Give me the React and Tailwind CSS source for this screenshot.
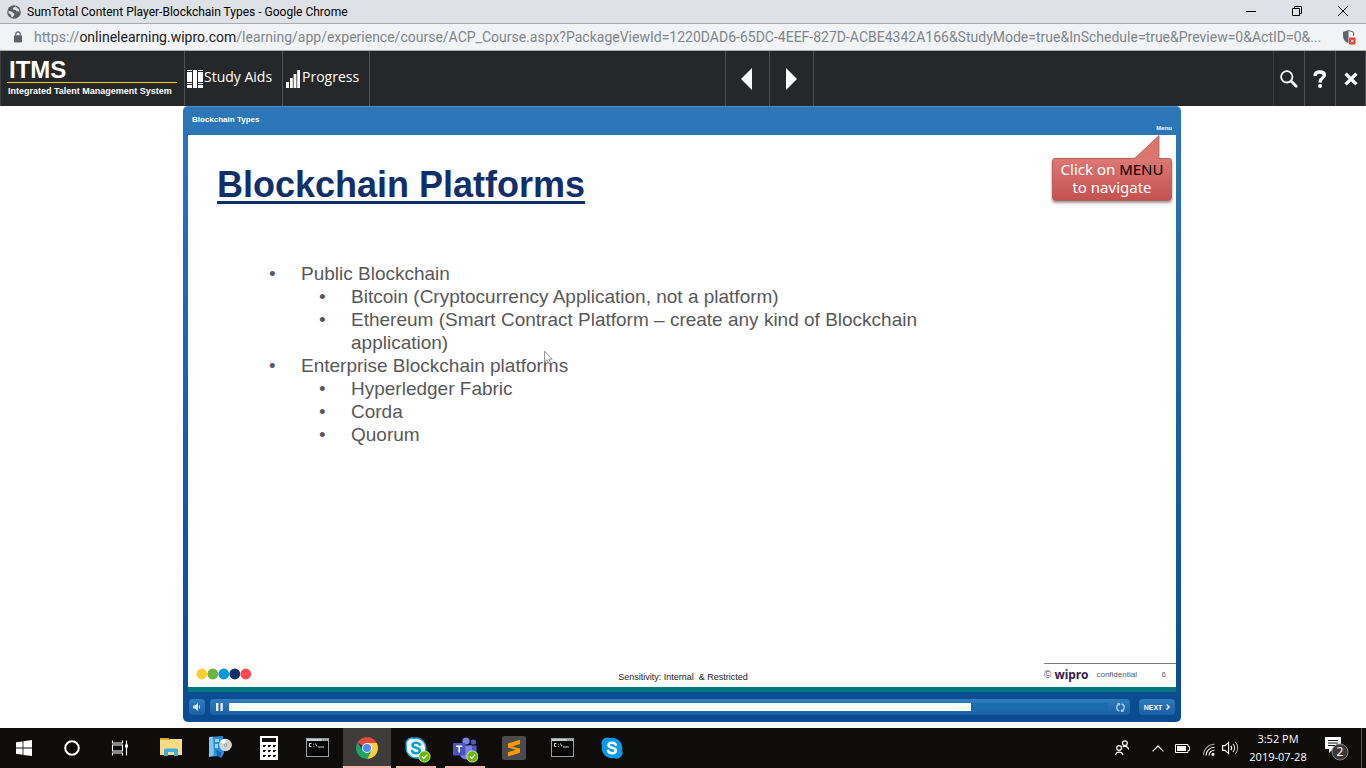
import React from "react";

const UI = "font-['Open_Sans','Noto_Sans',sans-serif]";

function GlobeIcon() {
  return (
    <svg viewBox="0 0 14 14" className="size-3.5" aria-hidden="true">
      <circle cx="7" cy="7" r="6.8" fill="#5a5e63" />
      <path d="M1.6 5.6 C3 7 4.6 6 5.4 7.2 C6 8.3 7.6 7.8 7.4 9.4 C7.2 10.6 6 10.8 5.6 12.4 L4 11.6 C4.6 9.6 3 9 1.4 8.2 Z M8.6 1.6 C7.6 2.6 5.6 2.6 5.8 4 C6 5.2 8.4 4.4 9 5.6 C9.6 6.8 11 6.4 12.4 6.8 L12 4.4 Z" fill="#dee1e6" />
    </svg>
  );
}

function LockIcon() {
  return (
    <svg viewBox="0 0 10 12" className="h-3 w-2.5" aria-hidden="true">
      <rect x="1" y="4.2" width="8" height="7.2" rx="0.8" fill="#5f6368" />
      <path d="M2.8 4.5 V3 a2.2 2.2 0 0 1 4.4 0 V4.5" fill="none" stroke="#5f6368" strokeWidth="1.2" />
    </svg>
  );
}

function ShieldIcon() {
  return (
    <svg viewBox="0 0 14 16" className="h-4 w-3.5" aria-hidden="true">
      <path d="M6.5 1 L1 3 V7 C1 10.4 3 12.8 6.5 14 Z" fill="#5f6368" />
      <path d="M6.5 1.4 L11.6 3.2 V7" fill="none" stroke="#5f6368" strokeWidth="1" />
      <rect x="7" y="8.5" width="6.5" height="7" rx="0.8" fill="#db4437" />
      <path d="M9 10.8 L11.6 13.4 M11.6 10.8 L9 13.4" stroke="#fff" strokeWidth="1" />
    </svg>
  );
}

function WindowButton({ label, children }) {
  return (
    <button type="button" aria-label={label} className="flex h-full w-[46px] items-center justify-center">
      <svg viewBox="0 0 12 12" className="size-3" fill="none" stroke="#000" strokeWidth="1" aria-hidden="true">
        {children}
      </svg>
    </button>
  );
}

function TitleBar() {
  return (
    <header className="flex h-6 items-center border-b border-[#a9abae] bg-[#dee1e6]">
      <div className="flex flex-1 items-center gap-1.5 pl-[7px]">
        <GlobeIcon />
        <h1 className="text-xs leading-4 text-black font-['Roboto',sans-serif]">SumTotal Content Player-Blockchain Types - Google Chrome</h1>
      </div>
      <div className="flex h-full pb-0.5">
        <WindowButton label="Minimize"><path d="M1 6.5 H11" /></WindowButton>
        <WindowButton label="Restore"><path d="M1.5 3.5 H8.5 V10.5 H1.5 Z M3.5 3.5 V1.5 H10.5 V8.5 H8.5" /></WindowButton>
        <WindowButton label="Close"><path d="M1 1 L11 11 M11 1 L1 11" /></WindowButton>
      </div>
    </header>
  );
}

function AddressBar() {
  return (
    <div className="flex h-[27px] items-center border-b border-[#a9abae] bg-[#f1f3f4] pl-[13px] pr-2.5">
      <LockIcon />
      <p className="ml-[11px] min-w-0 flex-1 truncate text-sm leading-5 text-[#80868b] font-['Roboto',sans-serif]">
        https://<span className="text-[#202124]">onlinelearning.wipro.com</span>/learning/app/experience/course/ACP_Course.aspx?PackageViewId=1220DAD6-65DC-4EEF-827D-ACBE4342A166&amp;StudyMode=true&amp;InSchedule=true&amp;Preview=0&amp;ActID=0&amp;...
      </p>
      <ShieldIcon />
    </div>
  );
}

function CourseToolbar() {
  return (
    <nav className={`flex h-[55px] border-l border-[#3c3e42] bg-[#262729] text-white ${UI}`}>
      <div className="flex w-[184px] flex-col border-r border-[#505257] pl-1.5 pr-[7px] pt-[7px] font-['Liberation_Sans',Arial,sans-serif] font-bold">
        <span className="border-b border-[#f2d022] pb-px pl-0.5 text-2xl leading-[23px]">ITMS</span>
        <span className="mt-0.5 whitespace-nowrap pl-px text-[9px] leading-3">Integrated Talent Management System</span>
      </div>
      <button type="button" className="flex w-[98px] items-center border-r border-[#505257] pb-1 pl-0.5 text-sm">
        <svg viewBox="0 0 17 18" className="mt-1 h-[18px] w-[17px]" fill="#fff" aria-hidden="true">
          <path d="M0 0h5v1H0z M0 2h5v10H0z M0 13h5v1H0z M0 15h5v3H0z M6 0h4v18H6z M11 0h5v1h-5z M11 2h5v10h-5z M11 13h5v1h-5z M11 15h5v3h-5z" />
        </svg>
        Study Aids
      </button>
      <button type="button" className="flex w-[87px] items-center gap-0.5 border-r border-[#505257] pb-1 pl-[3px] text-sm">
        <svg viewBox="0 0 14 18" className="mt-1 h-[18px] w-3.5" fill="#fff" aria-hidden="true">
          <path d="M0 12h3v6H0z M4 8h2.8v10H4z M7.6 4h2.8v14H7.6z M11.2 0H14v18h-2.8z" />
        </svg>
        Progress
      </button>
      <div className="ml-[26%] flex">
        <button type="button" aria-label="Previous" className="flex w-11 items-center justify-center border-l border-[#4b4f55] pr-0.5">
          <svg viewBox="0 0 11 22" className="h-[22px] w-[11px]" fill="#fff" aria-hidden="true"><path d="M11 0 V22 L0 11 Z" /></svg>
        </button>
        <button type="button" aria-label="Next" className="flex w-[45px] items-center justify-center border-x border-[#4b4f55]">
          <svg viewBox="0 0 11 22" className="h-[22px] w-[11px]" fill="#fff" aria-hidden="true"><path d="M0 0 V22 L11 11 Z" /></svg>
        </button>
      </div>
      <div className="ml-auto flex">
        <button type="button" aria-label="Search" className="flex w-[31px] items-center justify-center border-l border-[#3a3b3e]">
          <svg viewBox="0 0 18 18" className="size-[18px]" fill="none" stroke="#fff" aria-hidden="true">
            <circle cx="6.8" cy="6.8" r="5.7" strokeWidth="1.8" />
            <path d="M11.3 11.3 L16.2 16.2" strokeWidth="2.8" strokeLinecap="round" />
          </svg>
        </button>
        <button type="button" aria-label="Help" className="flex w-[31px] items-center justify-center border-l border-[#4b4f55]">
          <svg viewBox="0 0 14 18" className="h-[18px] w-3.5" fill="none" stroke="#fff" aria-hidden="true">
            <path d="M2 5.8 C2.2 3 4.2 2 6.8 2 C9.6 2 11.4 3.2 11.4 5.2 C11.4 8 7.4 8 7.2 11.4 V12.4" strokeWidth="3.4" />
            <circle cx="7.1" cy="15.9" r="2" fill="#fff" stroke="none" />
          </svg>
        </button>
        <button type="button" aria-label="Close course" className="flex w-[31px] items-center justify-center border-x border-[#4b4f55]">
          <svg viewBox="0 0 14 14" className="size-3.5" fill="none" stroke="#fff" strokeWidth="3.4" aria-hidden="true"><path d="M1.6 1.6 L12.4 12.4 M12.4 1.6 L1.6 12.4" /></svg>
        </button>
      </div>
    </nav>
  );
}

function Callout() {
  return (
    <div className="absolute right-1 top-0 w-[120px] font-['Noto_Sans',sans-serif] text-[15px] leading-[18px] text-white">
      <svg viewBox="0 0 120 24" className="block h-6 w-full" aria-hidden="true">
        <path d="M82 24 L107 0.5 V24" fill="#db7570" stroke="#a9605d" strokeWidth="0.8" />
      </svg>
      <p className="-mt-px rounded-[3px] border border-[#b5605d] bg-linear-to-b from-[#dc7874] to-[#c4514f] pb-1 pt-px text-center shadow-[0_2px_3px_rgba(0,0,0,0.4)]">
        Click on <span className="text-black">MENU</span>
        <br />
        to navigate
      </p>
    </div>
  );
}

function SlideList() {
  return (
    <ul className="ml-[81px] mt-14 max-w-[680px] pl-8 text-[19px] leading-[23px] text-[#58585a]">
      <Bullet text="Public Blockchain">
        <Bullet text="Bitcoin (Cryptocurrency Application, not a platform)" />
        <Bullet text="Ethereum (Smart Contract Platform – create any kind of Blockchain application)" />
      </Bullet>
      <Bullet text="Enterprise Blockchain platforms">
        <Bullet text="Hyperledger Fabric" />
        <Bullet text="Corda" />
        <Bullet text="Quorum" />
      </Bullet>
    </ul>
  );
}

function Bullet({ text, children }) {
  return (
    <li className="flex">
      <span className="-ml-8 w-8 shrink-0" aria-hidden="true">•</span>
      <div className="min-w-0 flex-1">
        <p>{text}</p>
        {children && <ul className="pl-[50px]">{children}</ul>}
      </div>
    </li>
  );
}

const DOTS = ["fill-[#fbd036]", "fill-[#6cb33f]", "fill-[#0099d8]", "fill-[#0d3068]", "fill-[#fb4b50]"];

function SlideFooter() {
  return (
    <footer className="mt-auto flex h-6 items-start justify-between">
      <svg viewBox="0 0 56 12" className="ml-2 mt-[5px] h-3 w-14" aria-hidden="true">
        {DOTS.map((c, i) => (
          <circle key={c} cx={5.8 + i * 11} cy="6" r="5.4" className={c} />
        ))}
      </svg>
      <p className="mt-2 pl-[70px] text-[9px] leading-3 text-[#222]">Sensitivity: Internal &nbsp;&amp; Restricted</p>
      <div className="flex w-[132px] items-center border-t border-[#7b7b7b] pt-[3px] text-[8px] leading-4 text-[#55555f]">
        <span className="text-[10px]">©</span>
        <span className="ml-[3px] text-xs font-bold text-[#34234f] font-['Noto_Sans',sans-serif]">wipro</span>
        <span className="ml-2">confidential</span>
        <span className="ml-auto mr-2.5">6</span>
      </div>
    </footer>
  );
}

function Controls() {
  const box = "flex h-4 items-center rounded-sm bg-linear-to-b from-[#2f7dbd] to-[#1b5fa5]";
  return (
    <div className="flex h-[30px] items-center gap-[5px]">
      <button type="button" aria-label="Mute" className={`${box} ml-px w-4 justify-center`}>
        <svg viewBox="0 0 8 8" className="size-2" fill="#dbe9f5" aria-hidden="true"><path d="M0 2.5h2L5 0v8L2 5.5H0z M6 2.6 h1 v2.8 h-1z" /></svg>
      </button>
      <div className={`${box} flex-1 pl-1.5 pr-[5px]`}>
        <button type="button" aria-label="Pause" className="mr-1.5">
          <svg viewBox="0 0 7 8" className="h-2 w-[7px]" fill="#e6eef6" aria-hidden="true"><path d="M0 0h2.4v8H0z M4.4 0h2.4v8H4.4z" /></svg>
        </button>
        <input
          type="range"
          aria-label="Slide progress"
          defaultValue="84"
          className="h-2 min-w-0 flex-1 appearance-none rounded-[1px] bg-[linear-gradient(to_right,#fff_84.4%,#1a6cae_84.4%)] [&::-webkit-slider-thumb]:size-0 [&::-webkit-slider-thumb]:appearance-none"
        />
        <button type="button" aria-label="Replay" className="ml-2">
          <svg viewBox="0 0 9 9" className="size-[9px]" fill="none" stroke="#a9cbe6" strokeWidth="1.4" aria-hidden="true"><path d="M3.4 8 A3.6 3.6 0 0 1 3 1.2 M5.6 1 A3.6 3.6 0 0 1 6 7.8 M1.4 0.8 H3.4 V2.6 M7.6 8.2 H5.6 V6.4" /></svg>
        </button>
      </div>
      <button type="button" className={`${box} ml-1 mr-px w-9 justify-center gap-1 text-[7px] font-bold leading-none text-white`}>
        NEXT
        <svg viewBox="0 0 4 6" className="h-1.5 w-1" fill="none" stroke="#fff" strokeWidth="1.4" aria-hidden="true"><path d="M0.6 0.6 L3 3 L0.6 5.4" /></svg>
      </button>
    </div>
  );
}

function Player() {
  return (
    <main className="flex flex-1 bg-white pb-1.5 pr-0.5 font-['Liberation_Sans',Arial,sans-serif]">
      <section className="mx-auto flex w-full max-w-[998px] flex-col rounded-[5px] border-t border-[#4a90cc] bg-linear-to-b from-[#2d77b9] to-[#0a4a90] px-[5px]">
        <div className="flex h-7 justify-between pl-1 pr-1 font-bold text-white">
          <span className="pt-[7px] text-[8px] leading-3">Blockchain Types</span>
          <button type="button" className="self-end text-[6px] leading-[14px]">Menu</button>
        </div>
        <article className="relative flex flex-1 flex-col border-b-[5px] border-[#04787c] bg-white">
          <h2 className="ml-[29px] mt-[29px] text-4xl font-bold leading-[42px] text-[#102f6b] underline decoration-[3px] underline-offset-[4px]">Blockchain Platforms</h2>
          <SlideList />
          <svg viewBox="0 0 9 15" className="absolute left-[356px] top-[215px] h-[15px] w-[9px]" aria-hidden="true">
            <path d="M0.5 1 V12 L3 9.8 L4.8 13.6 L6.4 12.8 L4.8 9.2 H8.2 Z" fill="#fff" stroke="#8d8d8d" strokeWidth="0.9" />
          </svg>
          <Callout />
          <SlideFooter />
        </article>
        <Controls />
      </section>
    </main>
  );
}

function TaskButton({ label, state = "", children }) {
  const bg = state === "active" ? "bg-[#3d3c3b] border-[#f9b4b1]" : "border-transparent";
  return (
    <button type="button" aria-label={label} className={`relative flex h-10 w-12 items-center justify-center border-b-2 ${bg}`}>
      {children}
      {state === "running" && <span className="absolute inset-x-1 -bottom-0.5 h-0.5 bg-[#f9b4b1]" />}
    </button>
  );
}

function TerminalIcon() {
  return (
    <svg viewBox="0 0 23 19" className="mr-0.5 h-[19px] w-[23px]" aria-hidden="true">
      <rect x="0.5" y="0.5" width="22" height="18" fill="#050505" stroke="#9aa0a4" />
      <rect x="1" y="1" width="21" height="2" fill="#c9ced1" />
      <path d="M16 1.5h1.4v1H16z M18 1.5h1.4v1H18z M20 1.5h1.4v1H20z" fill="#555" />
      <path d="M5.5 5.5 H3.5 V8.5 H5.5 M7.5 5.8v.8 M7.5 7.8v.8 M9.5 5.5l1.4 3 M12 9h6" fill="none" stroke="#e8e8e8" strokeWidth="0.9" />
    </svg>
  );
}

function SkypeLetter({ color }) {
  return (
    <path d="M14.8 7.7 C14 6.2 12.6 5.8 11 5.8 C9 5.8 7.5 6.6 7.5 8.3 C7.5 11.6 14.8 9.9 14.8 13.4 C14.8 15.2 13.2 16.2 11 16.2 C9 16.2 7.6 15.4 7.1 13.9" fill="none" stroke={color} strokeWidth="2.6" strokeLinecap="round" />
  );
}

function Check({ x, y }) {
  return (
    <g>
      <circle cx={x} cy={y} r="5.6" fill="#6bb700" stroke="#d9f0b8" strokeWidth="0.9" />
      <path d={`M${x - 2.5} ${y} l1.8 1.9 l3.4 -3.6`} fill="none" stroke="#fff" strokeWidth="1.3" />
    </g>
  );
}

function Taskbar() {
  return (
    <footer className={`flex h-10 items-stretch justify-between bg-[#0f0d0c] text-white ${UI}`}>
      <div className="flex">
        <div className="mr-[3px] flex">
          <TaskButton label="Start">
            <svg viewBox="0 0 16 16" className="mt-0.5 size-4" fill="#fff" aria-hidden="true"><path d="M0 2.3 L6.6 1.4 V7.6 H0 Z M7.4 1.2 L16 0 V7.6 H7.4 Z M0 8.4 H6.6 V14.7 L0 13.8 Z M7.4 8.4 H16 V16 L7.4 14.9 Z" /></svg>
          </TaskButton>
          <TaskButton label="Cortana">
            <svg viewBox="0 0 16 16" className="mt-0.5 size-4" aria-hidden="true"><circle cx="8" cy="8" r="6.8" fill="none" stroke="#fff" strokeWidth="2" /></svg>
          </TaskButton>
          <TaskButton label="Task View">
            <svg viewBox="0 0 18 16" className="mt-0.5 h-4 w-[18px]" fill="none" stroke="#fff" strokeWidth="1.1" aria-hidden="true">
              <path d="M1.5 0.5 V3 H11.5 V0.5 M1.5 5 H11.5 V11 H1.5 Z M1.5 15.5 V13 H11.5 V15.5 M15.5 0.5 V15.5" />
              <rect x="14" y="4.5" width="3" height="3" fill="#fff" stroke="none" />
            </svg>
          </TaskButton>
        </div>
        <div className="flex gap-px">
          <TaskButton label="File Explorer">
            <svg viewBox="0 0 22 18" className="h-[18px] w-[22px]" aria-hidden="true">
              <path d="M0 0 h8.5 l1.5 2 H0 Z" fill="#e8a81d" />
              <path d="M0 2 h9 l1 -1 h12 V17 H0 Z" fill="#fbdc83" />
              <path d="M4 18 V12 a1.5 1.5 0 0 1 1.5 -1.5 h11 A1.5 1.5 0 0 1 18 12 V18 H14 V14 H8 V18 Z" fill="#3aaee6" />
            </svg>
          </TaskButton>
          <TaskButton label="Software installer">
            <svg viewBox="0 0 24 24" className="size-6" aria-hidden="true">
              <path d="M1 2 L15 1 L16 18 L13 23 L11 21 L1 22 Z" fill="#2b8fd6" />
              <path d="M1 2 L5 1.8 L6 20 L1 22 Z" fill="#7cc6f2" />
              <path d="M7 4 h4 v3 h-4z M7 9 h3 v4 h-3z" fill="#9ad6f7" />
              <path d="M8 15 L13 17 L12 23 L9 20z" fill="#1565ad" />
              <circle cx="17.5" cy="10" r="6.2" fill="#cfd6da" />
              <path d="M17.5 10 L12 7 A6.2 6.2 0 0 1 17 3.8 Z" fill="#fff" />
              <path d="M17.5 10 L23 12.6 A6.2 6.2 0 0 0 23.4 8 Z" fill="#f1d88a" />
              <circle cx="17.5" cy="10" r="1.8" fill="#7f9aa8" />
              <circle cx="17.5" cy="10" r="0.8" fill="#fff" />
            </svg>
          </TaskButton>
          <TaskButton label="Calculator">
            <svg viewBox="0 0 18 24" className="mt-0.5 h-6 w-[18px]" aria-hidden="true">
              <rect width="18" height="24" fill="#fff" />
              <path d="M2 2h14v4H2z M3 9h3v1H5v1H3z M8 9h3v1h-1v1H8z M13 9h3v1h-1v1h-2z M3 14h3v1H5v1H3z M8 14h3v1h-1v1H8z M13 14h3v1h-1v1h-2z M3 19h3v1H5v1H3z M8 19h3v1h-1v1H8z M13 19h3v1h-1v1h-2z" fill="#111" />
            </svg>
          </TaskButton>
          <TaskButton label="Command Prompt"><TerminalIcon /></TaskButton>
          <TaskButton label="Google Chrome" state="active">
            <svg viewBox="0 0 22 22" className="mt-0.5 size-[22px]" aria-hidden="true">
              <path d="M11 11 L1.5 5.5 A11 11 0 0 1 20.5 5.5 Z" fill="#dd4b3e" />
              <path d="M11 11 V6 H20.8 A11 11 0 0 1 11 22 L15.3 13.5 Z" fill="#fdcd41" />
              <path d="M11 11 L6.7 13.5 L1.5 5.5 A11 11 0 0 0 11 22 L15.3 13.5 Z" fill="#1fa463" />
              <circle cx="11" cy="11" r="5" fill="#f4f4f4" />
              <circle cx="11" cy="11" r="4" fill="#4a8af4" />
            </svg>
          </TaskButton>
          <TaskButton label="Skype for Business" state="running">
            <svg viewBox="0 0 26 26" className="ml-1 mt-1.5 size-[26px]" aria-hidden="true">
              <path d="M6.5 1 A6 6 0 0 0 1.4 9 A9.8 9.8 0 0 0 13 20.8 A6 6 0 0 0 20.6 13 A9.8 9.8 0 0 0 9 1.3 A6 6 0 0 0 6.5 1 Z" fill="#f5fbfe" stroke="#0a9fdc" strokeWidth="1.4" />
              <SkypeLetter color="#0a9fdc" />
              <Check x={19.5} y={19.5} />
            </svg>
          </TaskButton>
          <TaskButton label="Microsoft Teams" state="running">
            <svg viewBox="0 0 26 26" className="mt-1.5 size-[26px]" aria-hidden="true">
              <circle cx="14" cy="4" r="3.6" fill="#7b83eb" />
              <circle cx="21.4" cy="5" r="2.6" fill="#5059c9" />
              <path d="M17 8.5 h7.5 v7 a4 4 0 0 1 -5 4 Z" fill="#5059c9" />
              <path d="M8 8.5 h12 v8 a6 6 0 0 1 -12 0 Z" fill="#7b83eb" />
              <rect x="1" y="6" width="12.4" height="12.4" rx="1" fill="#4b53bc" />
              <path d="M4 9.2 h6.4 M7.2 9.2 V15.6" stroke="#fff" strokeWidth="1.6" />
              <Check x={20.4} y={19.5} />
            </svg>
          </TaskButton>
          <TaskButton label="Sublime Text">
            <svg viewBox="0 0 24 24" className="mt-0.5 size-6" aria-hidden="true">
              <rect width="24" height="24" rx="2" fill="#4b4b4b" />
              <path d="M6 7.4 L18 3.8 V8 L10 10.4 L18 12.6 V16.8 L6 20.4 V16.2 L13.6 13.8 L6 11.6 Z" fill="#ff9800" />
            </svg>
          </TaskButton>
          <TaskButton label="Second Command Prompt"><TerminalIcon /></TaskButton>
          <TaskButton label="Skype">
            <svg viewBox="0 0 22 22" className="mt-0.5 size-[22px]" aria-hidden="true">
              <path d="M6.5 0.4 A6 6 0 0 0 1 9 A10 10 0 0 0 13 21 A6 6 0 0 0 21 13 A10 10 0 0 0 9 1 A6 6 0 0 0 6.5 0.4 Z" fill="#0a9be8" />
              <SkypeLetter color="#fff" />
            </svg>
          </TaskButton>
        </div>
      </div>

      <div className="flex items-center">
        <button type="button" aria-label="People" className="mr-[22px]">
          <svg viewBox="0 0 15 16" className="size-4" fill="none" stroke="#fff" strokeWidth="1.2" aria-hidden="true">
            <circle cx="4.6" cy="8" r="2.4" /><path d="M1 15 A3.8 3.8 0 0 1 8.4 15" />
            <circle cx="10.4" cy="3.2" r="2.4" /><path d="M8.2 7 A3.8 3.8 0 0 1 14.2 9.6" />
          </svg>
        </button>
        <button type="button" aria-label="Show hidden icons" className="mr-[11px]">
          <svg viewBox="0 0 12 7" className="h-[7px] w-3" fill="none" stroke="#fff" strokeWidth="1.3" aria-hidden="true"><path d="M0.6 6.4 L6 1 L11.4 6.4" /></svg>
        </button>
        <svg viewBox="0 0 15 9" className="mr-3 h-[9px] w-[15px]" role="img" aria-label="Battery">
          <path d="M0.5 0.5 h12.5 v2 h1.5 v4 h-1.5 v2 H0.5 Z" fill="none" stroke="#fff" />
          <rect x="2" y="2" width="9" height="5" fill="#fff" />
        </svg>
        <svg viewBox="0 0 13 13" className="mr-[7px] mt-0.5 size-[13px]" fill="none" stroke="#fff" strokeWidth="1.1" role="img" aria-label="Wireless network">
          <path d="M1.5 12 A11 11 0 0 1 12.5 1.2" stroke="#9a9a9a" /><path d="M4 12.4 A8.4 8.4 0 0 1 12.5 4.2" /><path d="M7 12.4 A5.4 5.4 0 0 1 12.5 7.2" /><circle cx="11" cy="11.2" r="1" fill="#fff" />
        </svg>
        <svg viewBox="0 0 17 14" className="mr-[9px] h-3.5 w-[17px]" fill="none" stroke="#fff" strokeWidth="1.1" role="img" aria-label="Volume">
          <path d="M0.6 4.6 H3 L6.6 1.4 V12.6 L3 9.4 H0.6 Z M8.8 4.8 A3.4 3.4 0 0 1 8.8 9.2" /><path d="M11 3 A6 6 0 0 1 11 11" /><path d="M13.4 1.2 A8.6 8.6 0 0 1 13.4 12.8" stroke="#aaa" />
        </svg>
        <div className="w-[60px] whitespace-nowrap text-center text-[11px] leading-[18px]">
          <p>3:52 PM</p>
          <p>2019-07-28</p>
        </div>
        <button type="button" aria-label="Notifications" className="ml-4">
          <svg viewBox="0 0 25 25" className="size-[25px]" aria-hidden="true">
            <path d="M1 1 H17 V13 H9 L5 17 V13 H1 Z" fill="#fff" />
            <path d="M4 4.5 H14 M4 7 H14 M4 9.5 H11" stroke="#111" strokeWidth="1" />
            <circle cx="16" cy="16" r="8" fill="#3b3a39" stroke="#858381" strokeWidth="1" />
            <text x="16" y="20" textAnchor="middle" fontSize="12" fill="#fff" fontFamily="Noto Sans, sans-serif">2</text>
          </svg>
        </button>
        <div className="ml-3 mr-1 h-full border-l border-[#5b5958]" />
      </div>
    </footer>
  );
}

export default function App() {
  return (
    <div className="flex min-h-screen flex-col bg-white">
      <TitleBar />
      <AddressBar />
      <CourseToolbar />
      <Player />
      <Taskbar />
    </div>
  );
}
